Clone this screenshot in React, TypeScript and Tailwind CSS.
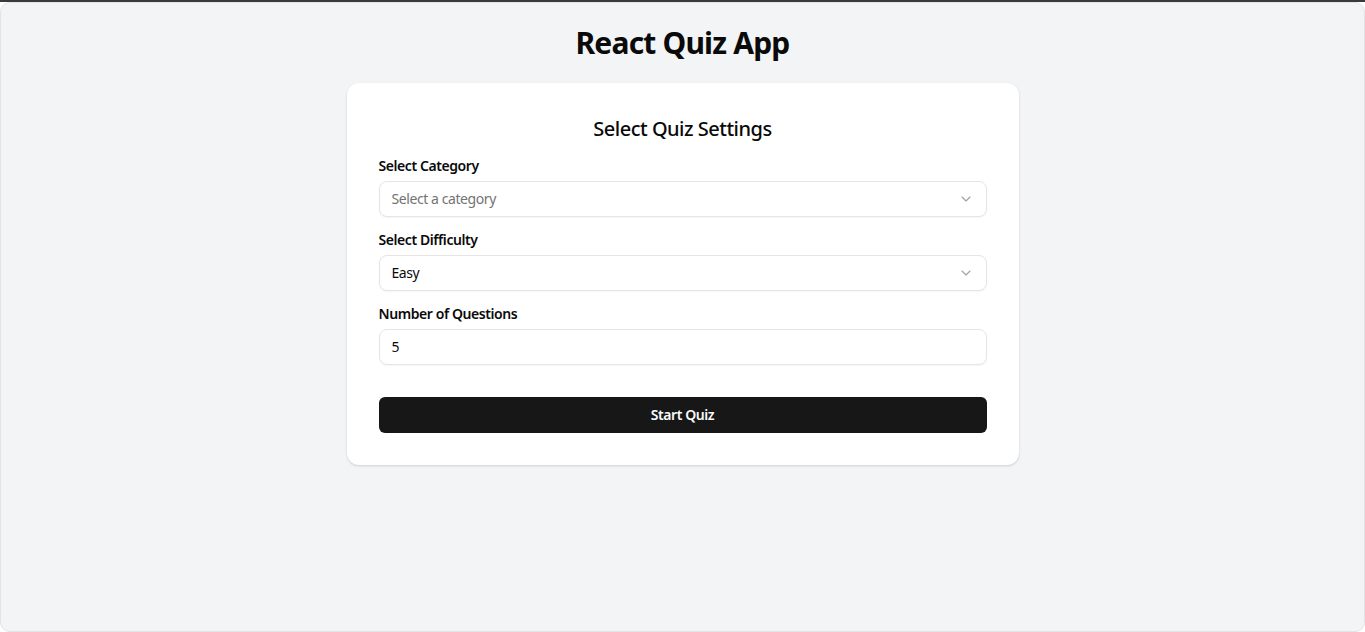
import React from "react";
import { ChevronDown } from "lucide-react";

const font = { fontFamily: '"Noto Sans", "Open Sans", sans-serif' };

function SelectBox({ text, placeholder }: { text: string; placeholder?: boolean }) {
  return (
    <div className="flex h-9 w-full items-center justify-between rounded-lg border border-[#e5e5e5] bg-white pl-3 pr-3 shadow-[0_1px_2px_rgba(0,0,0,0.04)]">
      <span className={`text-sm tracking-[-0.03em] ${placeholder ? "text-[#737373]" : "text-[#0a0a0a]"}`}>{text}</span>
      <ChevronDown className="h-4 w-4 text-[#a3a3a3]" strokeWidth={1.75} />
    </div>
  );
}

export default function App() {
  return (
    <div className="h-[632px] w-full overflow-hidden bg-white" style={font}>
      <div className="h-[2px] w-full bg-[#3a3a3a]" />
      <div className="h-[630px] w-full rounded-[10px] border border-[#e2e3e5] bg-[#f3f4f6]">
        <div className="flex flex-col items-center">
          <h1 className="mt-[22px] text-[30px] font-bold leading-[36px] tracking-[-0.027em] text-[#0a0a0a]">React Quiz App</h1>
          <div className="mt-[22px] w-[672px] rounded-xl bg-white px-8 pb-8 pt-8 shadow-[0_1px_3px_rgba(0,0,0,0.1),0_1px_2px_rgba(0,0,0,0.06)]">
            <h2 className="text-center text-xl font-medium leading-7 tracking-[-0.025em] text-[#0a0a0a]">Select Quiz Settings</h2>
            <div className="mt-[13px] flex flex-col gap-[13px]">
              <div className="flex flex-col gap-[5px]">
                <label className="text-sm font-semibold leading-5 tracking-[-0.03em] text-[#0a0a0a]">Select Category</label>
                <SelectBox text="Select a category" placeholder />
              </div>
              <div className="flex flex-col gap-[5px]">
                <label className="text-sm font-semibold leading-5 tracking-[-0.03em] text-[#0a0a0a]">Select Difficulty</label>
                <SelectBox text="Easy" />
              </div>
              <div className="flex flex-col gap-[5px]">
                <label className="text-sm font-semibold leading-5 tracking-[-0.03em] text-[#0a0a0a]">Number of Questions</label>
                <div className="flex h-9 w-full items-center rounded-lg border border-[#e5e5e5] bg-white px-3 shadow-[0_1px_2px_rgba(0,0,0,0.04)]">
                  <span className="text-sm text-[#0a0a0a]">5</span>
                </div>
              </div>
            </div>
            <button className="mt-8 flex h-9 w-full items-center justify-center rounded-md bg-[#171717] text-sm font-semibold tracking-[-0.03em] text-[#fafafa]">
              Start Quiz
            </button>
          </div>
        </div>
      </div>
    </div>
  );
}
